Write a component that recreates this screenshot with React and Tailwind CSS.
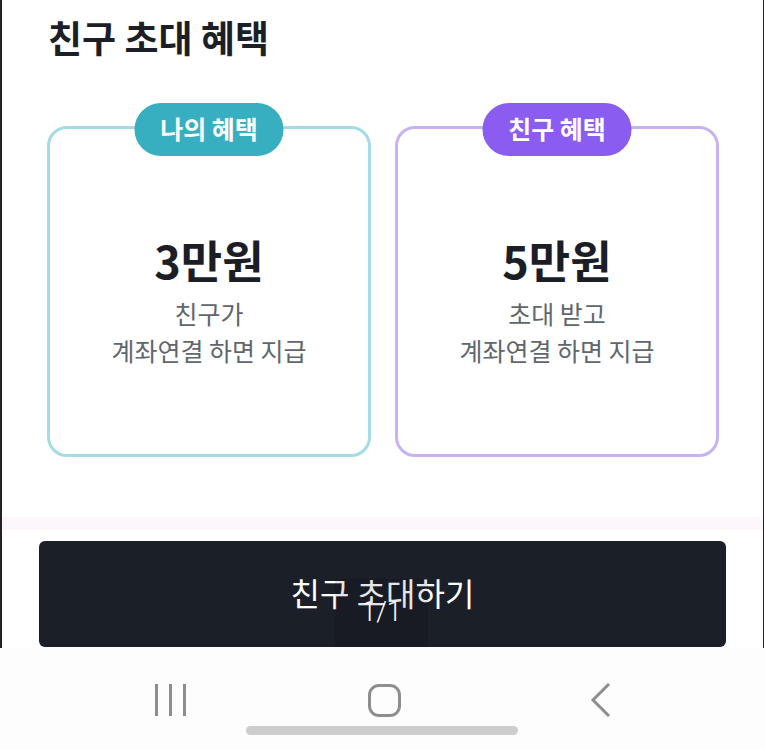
import React from 'react';

const font = { fontFamily: '"Noto Sans CJK KR", "Noto Sans", sans-serif' };

const BenefitCard = ({ label, amount, lines, badge, border }) => {
  return (
    <div className={`relative w-[324px] h-[331px] rounded-[20px] border-[3px] bg-white ${border}`}>
      <div className={`absolute left-1/2 -translate-x-1/2 -top-[26px] w-[149px] h-[53px] rounded-full flex items-center justify-center text-white text-[25px] font-bold ${badge}`}>
        <span className="-mt-[2px]">{label}</span>
      </div>
      <div className="flex flex-col items-center pt-[105px]">
        <div className="text-[45px] leading-[52px] font-bold text-[#1b1e25]">{amount}</div>
        <div className="mt-[9px] text-[25px] leading-[37px] text-[#60666e] text-center">
          {lines.map((l) => (
            <div key={l}>{l}</div>
          ))}
        </div>
      </div>
    </div>
  );
};

const App = () => {
  return (
    <div className="w-[765px] h-[750px] bg-white flex flex-col overflow-hidden" style={font}>
      <div className="relative h-[648px] border-l-2 border-r border-[#222] mr-[1px]">
        <h1 className="pl-[46px] pt-[13px] text-[37px] leading-[48px] font-bold text-[#1c1f26]">친구 초대 혜택</h1>
        <div className="flex gap-[24px] pl-[45px] mt-[65px]">
          <BenefitCard
            label="나의 혜택"
            amount="3만원"
            lines={['친구가', '계좌연결 하면 지급']}
            badge="bg-[#37afc1]"
            border="border-[#a3dce4]"
          />
          <BenefitCard
            label="친구 혜택"
            amount="5만원"
            lines={['초대 받고', '계좌연결 하면 지급']}
            badge="bg-[#8b5cf0]"
            border="border-[#c7b2f6]"
          />
        </div>
        <div className="mt-[60px] h-[13px] bg-[#fdf7fb]" />
        <div className="relative mt-[11px] ml-[37px] w-[687px] h-[106px] rounded-[6px] bg-[#1b1f28] flex items-center justify-center">
          <span className="text-white text-[32px] leading-none -mt-[4px]">친구 초대하기</span>
          <div className="absolute left-[296px] top-[38px] w-[93px] h-[68px] bg-black/10 flex items-start justify-center pt-[20px]">
            <span className="text-white text-[27px] leading-none font-light" style={{ fontFamily: 'Roboto, sans-serif' }}>1/1</span>
          </div>
        </div>
      </div>
      <div className="flex-1 bg-[#fdfdfd] flex flex-col">
        <div className="flex items-center h-[34px] mt-[35px]">
          <div className="ml-[155px] flex gap-[11px]">
            <div className="w-[3px] h-[32px] bg-[#8e8e8e]" />
            <div className="w-[3px] h-[32px] bg-[#8e8e8e]" />
            <div className="w-[3px] h-[32px] bg-[#8e8e8e]" />
          </div>
          <div className="ml-[182px] w-[33px] h-[33px] rounded-[11px] border-[3px] border-[#8e8e8e]" />
          <svg className="ml-[189px]" width="22" height="36" viewBox="0 0 22 36">
            <polyline points="19,2 3,18 19,34" fill="none" stroke="#8e8e8e" strokeWidth="3" />
          </svg>
        </div>
        <div className="ml-[246px] mt-[9px] w-[272px] h-[9px] rounded-full bg-[#cdcdcd]" />
      </div>
    </div>
  );
};

export default App;
